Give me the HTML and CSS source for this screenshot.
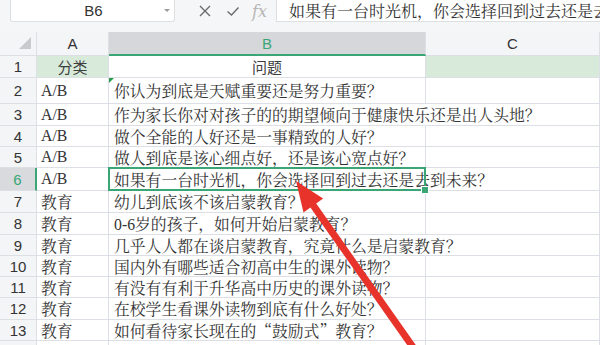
FILE: index.html
```html
<!DOCTYPE html>
<html lang="zh-CN">
<head>
    <meta charset="UTF-8">
    <meta name="viewport" content="width=device-width, initial-scale=1.0">
    <title>表格</title>
    <link rel="stylesheet" href="styles.css">
</head>
<body>
    <div class="app">
        <div class="toolbar">
            <div class="namebox">
                <span class="ref">B6</span>
                <span class="drop"></span>
            </div>
            <div class="tools">
                <svg class="ico" width="14" height="14" viewBox="0 0 14 14">
                    <path d="M2 2 L12 12 M12 2 L2 12" stroke="#6b6b6b" stroke-width="1.4" fill="none"/>
                </svg>
                <svg class="ico" width="14" height="14" viewBox="0 0 14 14">
                    <path d="M1.5 7.5 L5.5 11 L12.5 3.5" stroke="#6b6b6b" stroke-width="1.4" fill="none"/>
                </svg>
                <span class="fx">fx</span>
            </div>
            <div class="formula">如果有一台时光机，你会选择回到过去还是去到未来？</div>
        </div>

        <div class="sheet">
            <div class="cell hd corner"></div>
            <div class="cell hd">A</div>
            <div class="cell hd active-col">B</div>
            <div class="cell hd">C</div>

            <div class="cell rh">1</div>
            <div class="cell a green center">分类</div>
            <div class="cell b center">问题</div>
            <div class="cell green"></div>

            <div class="cell rh">2</div>
            <div class="cell a">A/B</div>
            <div class="cell b note">你认为到底是天赋重要还是努力重要<span class="q">？</span></div>
            <div class="cell"></div>

            <div class="cell rh">3</div>
            <div class="cell a">A/B</div>
            <div class="cell b spill">作为家长你对对孩子的的期望倾向于健康快乐还是出人头地<span class="q">？</span></div>
            <div class="cell"></div>

            <div class="cell rh">4</div>
            <div class="cell a">A/B</div>
            <div class="cell b">做个全能的人好还是一事精致的人好<span class="q">？</span></div>
            <div class="cell"></div>

            <div class="cell rh">5</div>
            <div class="cell a">A/B</div>
            <div class="cell b">做人到底是该心细点好，还是该心宽点好<span class="q">？</span></div>
            <div class="cell"></div>

            <div class="cell rh active-row">6</div>
            <div class="cell a">A/B</div>
            <div class="cell b spill sel">如果有一台时光机，你会<span class="caret"></span>选择回到过去还是去到未来<span class="q">？</span></div>
            <div class="cell"></div>

            <div class="cell rh">7</div>
            <div class="cell a">教育</div>
            <div class="cell b">幼儿到底该不该启蒙教育<span class="q">？</span></div>
            <div class="cell"></div>

            <div class="cell rh">8</div>
            <div class="cell a">教育</div>
            <div class="cell b">0-6岁的孩子，如何开始启蒙教育<span class="q">？</span></div>
            <div class="cell"></div>

            <div class="cell rh">9</div>
            <div class="cell a">教育</div>
            <div class="cell b spill">几乎人人都在谈启蒙教育，究竟什么是启蒙教育<span class="q">？</span></div>
            <div class="cell"></div>

            <div class="cell rh">10</div>
            <div class="cell a">教育</div>
            <div class="cell b">国内外有哪些适合初高中生的课外读物<span class="q">？</span></div>
            <div class="cell"></div>

            <div class="cell rh">11</div>
            <div class="cell a">教育</div>
            <div class="cell b">有没有有利于升华高中历史的课外读物<span class="q">？</span></div>
            <div class="cell"></div>

            <div class="cell rh">12</div>
            <div class="cell a">教育</div>
            <div class="cell b">在校学生看课外读物到底有什么好处<span class="q">？</span></div>
            <div class="cell"></div>

            <div class="cell rh">13</div>
            <div class="cell a">教育</div>
            <div class="cell b">如何看待家长现在的<span class="q">“</span>鼓励式<span class="q">”</span>教育<span class="q">？</span></div>
            <div class="cell"></div>

            <div class="cell rh"></div>
            <div class="cell a"></div>
            <div class="cell b"></div>
            <div class="cell"></div>
        </div>

        <svg class="arrow" width="600" height="345" viewBox="0 0 600 345">
            <polygon points="296,181 323.1,198.6 316.2,203.5 417.9,348 412.1,352 310.4,207.5 303.5,212.4" fill="#e8332b"/>
        </svg>
    </div>
</body>
</html>
```

FILE: styles.css
```css
* {
    margin: 0;
    padding: 0;
    box-sizing: border-box;
}

body {
    background: #fff;
    font-family: "Liberation Serif", "Noto Serif CJK SC", "Noto Sans CJK SC", serif;
    color: #333;
}

.app {
    position: relative;
    width: 600px;
    height: 345px;
    overflow: hidden;
}

/* formula bar */
.toolbar {
    display: flex;
    align-items: flex-start;
    height: 32px;
    background: #f5f6f7;
}
.namebox {
    display: flex;
    align-items: center;
    width: 165px;
    height: 22px;
    margin-left: 10px;
    background: #fff;
    border: 1px solid #dedfe1;
    border-top: none;
    border-radius: 0 0 3px 3px;
}
.namebox .ref {
    flex: 1;
    text-align: center;
    padding-left: 12px;
    font-family: "Liberation Sans", "Noto Sans", sans-serif;
    font-size: 15px;
    color: #333;
}
.namebox .drop {
    width: 0;
    height: 0;
    margin-right: 4px;
    border-left: 3px solid transparent;
    border-right: 3px solid transparent;
    border-top: 3px solid #9a9a9a;
}
.tools {
    display: flex;
    align-items: center;
    width: 101px;
    height: 22px;
    padding-left: 23px;
    gap: 14px;
}
.tools .fx {
    font-family: "DejaVu Serif", "Liberation Serif", serif;
    font-style: italic;
    font-size: 16px;
    color: #b5b5b5;
    margin-left: -2px;
}
.formula {
    flex: 1;
    height: 22px;
    padding-left: 12px;
    background: #fff;
    border-left: 1px solid #dedfe1;
    border-bottom: 1px solid #dedfe1;
    font-family: "Noto Serif CJK SC", "Noto Sans CJK SC", serif;
    font-size: 16px;
    line-height: 21px;
    white-space: nowrap;
    overflow: hidden;
    color: #333;
}

/* sheet */
.sheet {
    display: grid;
    grid-template-columns: 37px 72px 317px 1fr;
    grid-template-rows: 24px 22px 26px 22px 21px 21px 23px 22px 22px 21px 21px 21px 22px 21px 20px;
    height: 313px;
    overflow: hidden;
}
.cell {
    display: flex;
    align-items: center;
    min-width: 0;
    white-space: nowrap;
    border-right: 1px solid #dcdfe5;
    border-bottom: 1px solid #dcdfe5;
    font-size: 15.8px;
    color: #333;
}
.cell.a {
    padding-left: 4px;
}
.cell.b {
    padding-left: 5px;
}
.cell.center {
    justify-content: center;
    padding-left: 0;
    font-family: "Noto Sans CJK SC", sans-serif;
    font-size: 15px;
    color: #3d3d3d;
}
.cell.green {
    background: #d8ebdb;
}
.cell.spill {
    border-right-color: transparent;
}
/* full-width punctuation keeps a full cell of width */
.q {
    display: inline-block;
    width: 1em;
    text-align: center;
    font-family: "Noto Serif CJK SC", "Noto Sans CJK SC", serif;
}

.hd,
.rh {
    justify-content: center;
    background: #f4f5f7;
    font-family: "Liberation Sans", "Noto Sans", sans-serif;
    font-size: 15px;
    color: #333;
    border-color: #dcdfe4;
}
.hd.active-col {
    background: #d5d7db;
    color: #3aa676;
    border-bottom: 2px solid #3aa676;
}
.rh.active-row {
    background: #d8dadd;
    color: #3aa676;
    border-right: 2px solid #3aa676;
}
.corner {
    position: relative;
}
.corner::after {
    content: '';
    position: absolute;
    right: 5px;
    bottom: 6px;
    border-left: 12px solid transparent;
    border-bottom: 12px solid #c8cacd;
}

/* comment marker */
.note {
    position: relative;
}
.note::before {
    content: '';
    position: absolute;
    top: 0;
    left: 0;
    border-top: 5px solid #2d9b4c;
    border-right: 5px solid transparent;
}

/* active cell */
.sel {
    position: relative;
}
.sel::after {
    content: '';
    position: absolute;
    top: -1px;
    left: -1px;
    right: -1px;
    bottom: -1px;
    border: 2px solid #3aa676;
    pointer-events: none;
}
.sel::before {
    content: '';
    position: absolute;
    right: -4px;
    bottom: -4px;
    width: 6px;
    height: 6px;
    background: #3aa676;
    border: 1px solid #fff;
    z-index: 1;
}
.caret {
    display: inline-block;
    width: 1px;
    height: 17px;
    background: #111;
}

.arrow {
    position: absolute;
    top: 0;
    left: 0;
    pointer-events: none;
}
```
